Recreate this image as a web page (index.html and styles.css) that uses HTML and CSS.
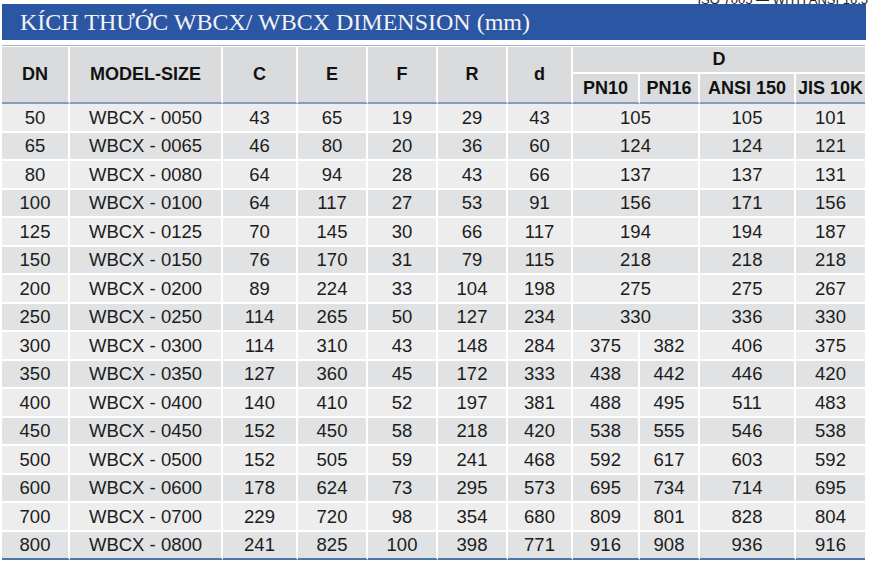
FILE: index.html
```html
<!DOCTYPE html>
<html>

<head>
	<title>WBCX Dimension</title>
	<meta charset="UTF-8">
	<link rel="stylesheet" href="styles.css">
</head>

<body>
	<div class="top-strip"><span>ISO 7005 — WITH ANSI 16.5</span></div>
	<h2 class="title">KÍCH THƯỚC WBCX/ WBCX DIMENSION (mm)</h2>
	<div class="rule"></div>
	<table class="dim">
		<colgroup>
			<col style="width:68px">
			<col style="width:153px">
			<col style="width:75px">
			<col style="width:70px">
			<col style="width:70px">
			<col style="width:70px">
			<col style="width:65px">
			<col style="width:67px">
			<col style="width:60px">
			<col style="width:96px">
			<col style="width:69px">
		</colgroup>
		<thead>
			<tr class="h1">
				<th rowspan="2">DN</th>
				<th rowspan="2">MODEL-SIZE</th>
				<th rowspan="2">C</th>
				<th rowspan="2">E</th>
				<th rowspan="2">F</th>
				<th rowspan="2">R</th>
				<th rowspan="2">d</th>
				<th colspan="4" class="last">D</th>
			</tr>
			<tr class="h2">
				<th>PN10</th>
				<th>PN16</th>
				<th>ANSI 150</th>
				<th class="last">JIS 10K</th>
			</tr>
		</thead>
		<tbody>
			<tr><td>50</td><td>WBCX - 0050</td><td>43</td><td>65</td><td>19</td><td>29</td><td>43</td><td colspan="2">105</td><td>105</td><td>101</td></tr>
			<tr><td>65</td><td>WBCX - 0065</td><td>46</td><td>80</td><td>20</td><td>36</td><td>60</td><td colspan="2">124</td><td>124</td><td>121</td></tr>
			<tr><td>80</td><td>WBCX - 0080</td><td>64</td><td>94</td><td>28</td><td>43</td><td>66</td><td colspan="2">137</td><td>137</td><td>131</td></tr>
			<tr><td>100</td><td>WBCX - 0100</td><td>64</td><td>117</td><td>27</td><td>53</td><td>91</td><td colspan="2">156</td><td>171</td><td>156</td></tr>
			<tr><td>125</td><td>WBCX - 0125</td><td>70</td><td>145</td><td>30</td><td>66</td><td>117</td><td colspan="2">194</td><td>194</td><td>187</td></tr>
			<tr><td>150</td><td>WBCX - 0150</td><td>76</td><td>170</td><td>31</td><td>79</td><td>115</td><td colspan="2">218</td><td>218</td><td>218</td></tr>
			<tr><td>200</td><td>WBCX - 0200</td><td>89</td><td>224</td><td>33</td><td>104</td><td>198</td><td colspan="2">275</td><td>275</td><td>267</td></tr>
			<tr><td>250</td><td>WBCX - 0250</td><td>114</td><td>265</td><td>50</td><td>127</td><td>234</td><td colspan="2">330</td><td>336</td><td>330</td></tr>
			<tr><td>300</td><td>WBCX - 0300</td><td>114</td><td>310</td><td>43</td><td>148</td><td>284</td><td>375</td><td>382</td><td>406</td><td>375</td></tr>
			<tr><td>350</td><td>WBCX - 0350</td><td>127</td><td>360</td><td>45</td><td>172</td><td>333</td><td>438</td><td>442</td><td>446</td><td>420</td></tr>
			<tr><td>400</td><td>WBCX - 0400</td><td>140</td><td>410</td><td>52</td><td>197</td><td>381</td><td>488</td><td>495</td><td>511</td><td>483</td></tr>
			<tr><td>450</td><td>WBCX - 0450</td><td>152</td><td>450</td><td>58</td><td>218</td><td>420</td><td>538</td><td>555</td><td>546</td><td>538</td></tr>
			<tr><td>500</td><td>WBCX - 0500</td><td>152</td><td>505</td><td>59</td><td>241</td><td>468</td><td>592</td><td>617</td><td>603</td><td>592</td></tr>
			<tr><td>600</td><td>WBCX - 0600</td><td>178</td><td>624</td><td>73</td><td>295</td><td>573</td><td>695</td><td>734</td><td>714</td><td>695</td></tr>
			<tr><td>700</td><td>WBCX - 0700</td><td>229</td><td>720</td><td>98</td><td>354</td><td>680</td><td>809</td><td>801</td><td>828</td><td>804</td></tr>
			<tr><td>800</td><td>WBCX - 0800</td><td>241</td><td>825</td><td>100</td><td>398</td><td>771</td><td>916</td><td>908</td><td>936</td><td>916</td></tr>
		</tbody>
	</table>
</body>

</html>
```

FILE: styles.css
```css
body {
	margin: 0;
	background: #fff;
	font-family: "Liberation Sans", Arial, sans-serif;
	color: #1c1c1c;
}

.top-strip {
	height: 4px;
	overflow: hidden;
	display: flex;
	justify-content: flex-end;
	align-items: flex-end;
	padding-right: 6px;
}

.top-strip span {
	font-size: 13px;
	line-height: 14px;
	margin-bottom: -3px;
	white-space: nowrap;
	color: #222;
}

.title {
	margin: 0 8px 0 2px;
	height: 36px;
	line-height: 37px;
	background: #2b56a3;
	color: #f3f3f3;
	font-family: "Liberation Serif", "Times New Roman", serif;
	font-weight: normal;
	font-size: 24px;
	padding-left: 18px;
	white-space: nowrap;
}

.rule {
	margin: 5px 9px 1px 2px;
	height: 1px;
	background: #a3b5ca;
}

.dim {
	margin-left: 2px;
	width: 863px;
	table-layout: fixed;
	border-collapse: separate;
	border-spacing: 0;
	text-align: center;
}

.dim th,
.dim td {
	padding: 0;
	border-right: 2px solid #fff;
	border-bottom: 2px solid #fff;
	white-space: nowrap;
	overflow: hidden;
}

.dim th.last,
.dim td:last-child {
	border-right: none;
}

.dim th {
	background: #dadbdd;
	font-size: 18px;
	font-weight: bold;
	color: #111;
}

.dim thead th[rowspan],
.dim .h2 th {
	border-bottom: 2px solid #819dbf;
}

.h1 {
	height: 27px;
}

.h2 {
	height: 30px;
}

.dim td {
	font-size: 18.5px;
	padding-top: 1px;
	background: #ededee;
}

.dim tbody tr {
	height: 28.5px;
}

.dim tbody tr:nth-child(even) td {
	background: #e1e2e3;
}

.dim tbody tr:last-child td {
	border-bottom: 2px solid #4d77a6;
}
```
